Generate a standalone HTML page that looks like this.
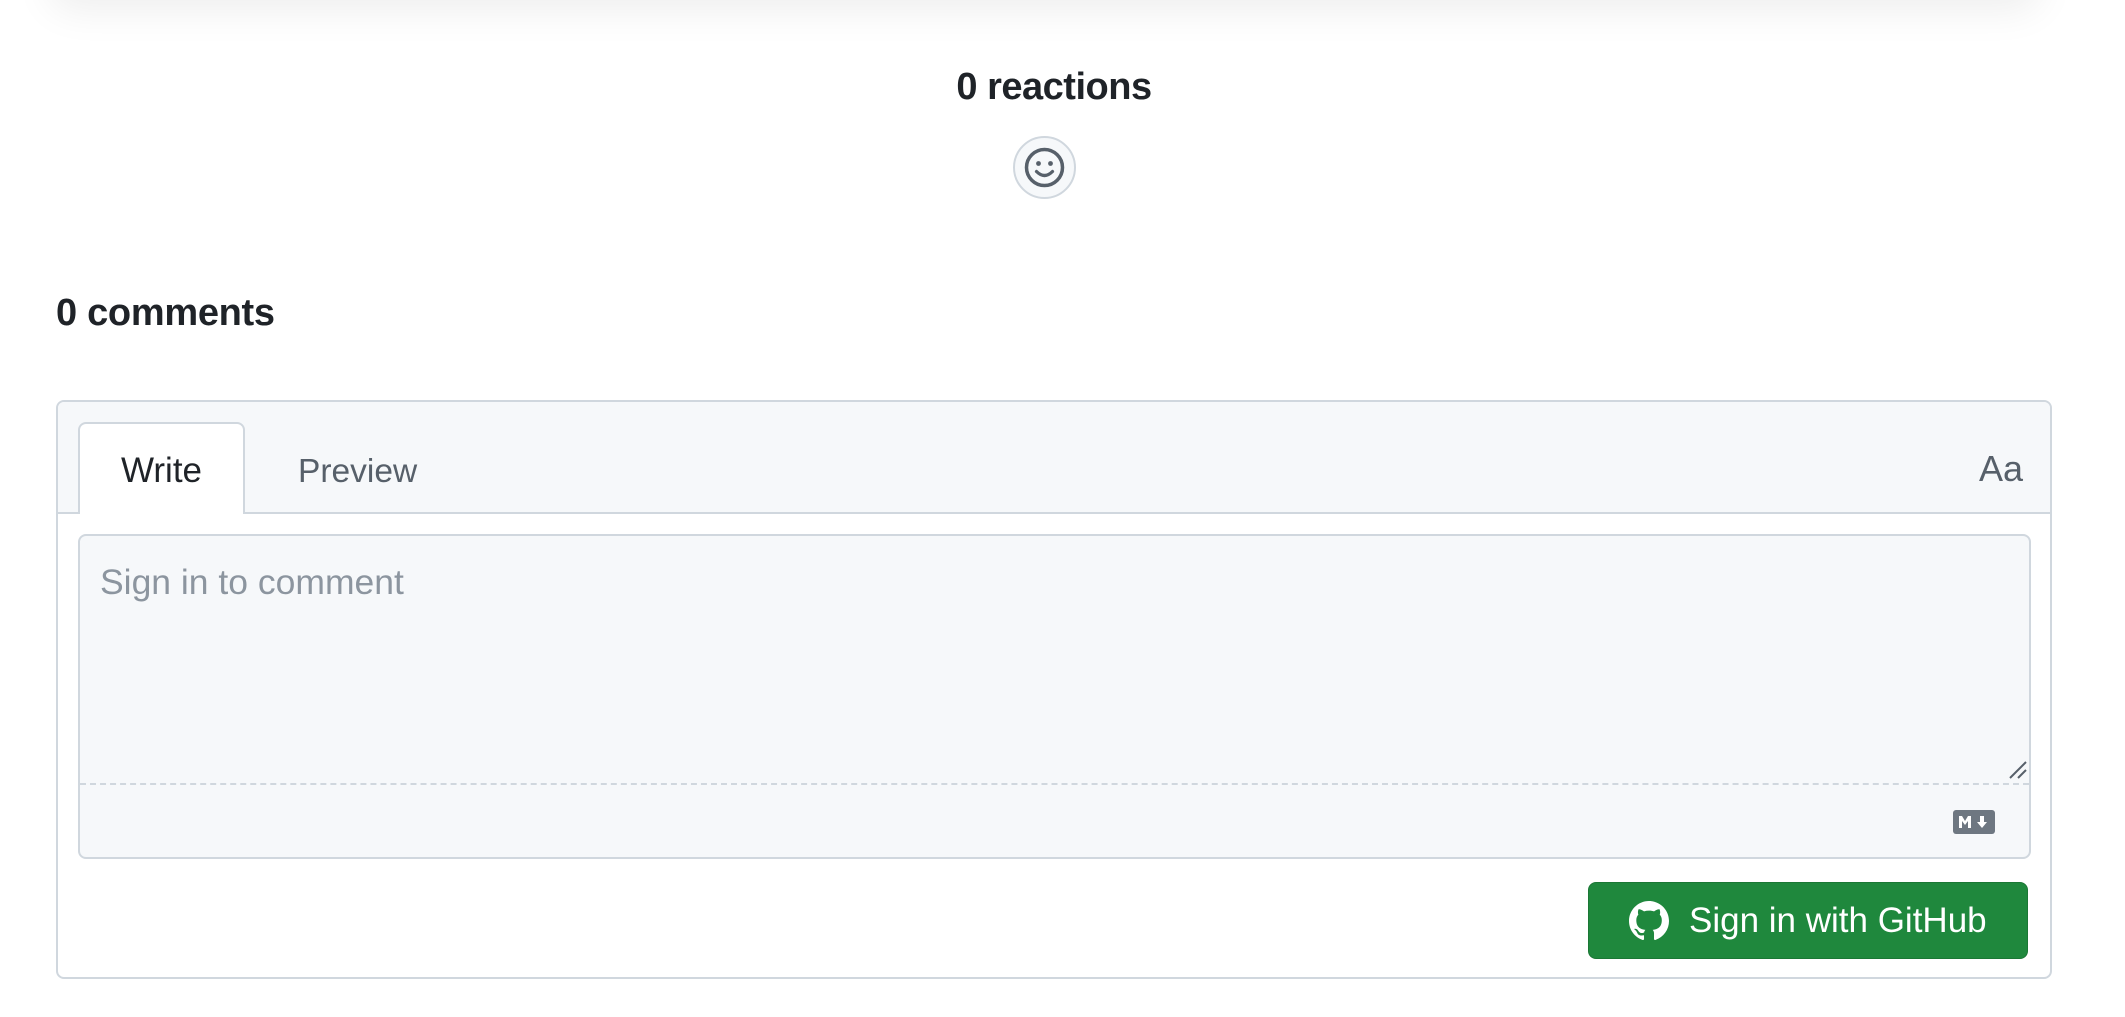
<!DOCTYPE html>
<html><head><meta charset="utf-8"><style>
*{box-sizing:border-box;margin:0;padding:0}
body{width:2125px;height:1017px;background:#fff;font-family:"Liberation Sans",sans-serif;position:relative;overflow:hidden;color:#1f2328}
.shadow{position:absolute;left:50px;top:-100px;width:1990px;height:100px;border-radius:20px;box-shadow:0 10px 40px rgba(0,0,0,0.07)}
.react{position:absolute;left:954px;width:200px;top:66px;text-align:center;font-size:38px;font-weight:bold;letter-spacing:-0.5px;line-height:42px}
.smile{position:absolute;left:1013px;top:136px;width:63px;height:63px;border-radius:50%;border:2px solid #d0d7de;background:#f6f8fa}
.cm{position:absolute;left:56px;top:292px;font-size:38px;font-weight:bold;letter-spacing:-0.3px;line-height:42px}
.box{position:absolute;left:56px;top:400px;width:1996px;height:579px;border:2px solid #d0d7de;border-radius:8px;background:#fff;overflow:hidden}
.hdr{position:absolute;left:0;top:0;width:100%;height:112px;background:#f6f8fa;border-bottom:2px solid #d0d7de}
.tab{position:absolute;left:20px;top:20px;width:167px;height:92px;background:#fff;border:2px solid #d0d7de;border-bottom:none;border-radius:8px 8px 0 0;font-size:35px;text-align:center;line-height:94px;color:#1f2328}
.prev{position:absolute;left:240px;top:26px;font-size:33.5px;line-height:88px;color:#57606a}
.aa{position:absolute;right:27px;top:27px;font-size:36px;line-height:80px;color:#57606a}
.ta{position:absolute;left:20px;top:132px;width:1953px;height:325px;border:2px solid #d0d7de;border-radius:8px;background:#f6f8fa}
.ph{position:absolute;left:20px;top:22px;font-size:35.5px;line-height:48px;color:#8c959f}
.dash{position:absolute;left:0;top:247px;width:100%;border-top:2px dashed #d0d7de}
.btn{position:absolute;left:1530px;top:480px;width:440px;height:77px;background:#1f883d;border-radius:8px;color:#fff;font-size:35px;line-height:75px;border:1px solid rgba(0,0,0,0.12)}
.btn span{position:absolute;left:100px}
</style></head><body>
<div class="shadow"></div>
<div class="react">0 reactions</div>
<div class="smile"><svg width="59" height="59" viewBox="0 0 59 59" style="position:absolute;left:0;top:0"><circle cx="29.5" cy="29.5" r="18" fill="none" stroke="#57606a" stroke-width="3.5"/><circle cx="23.5" cy="25.5" r="2.4" fill="#57606a"/><circle cx="35.5" cy="25.5" r="2.4" fill="#57606a"/><path d="M21.5 33.5 Q29.5 41.5 37.5 33.5" fill="none" stroke="#57606a" stroke-width="3.2" stroke-linecap="round"/></svg></div>
<div class="cm">0 comments</div>
<div class="box">
 <div class="hdr"></div>
 <div class="tab">Write</div>
 <div class="prev">Preview</div>
 <div class="aa">Aa</div>
 <div class="ta">
  <div class="ph">Sign in to comment</div>
  <svg style="position:absolute;left:1928px;top:224px" width="20" height="20" viewBox="0 0 20 20"><path d="M2 18 L18 2 M10 18 L18 10" stroke="#57606a" stroke-width="2"/></svg>
  <div class="dash"></div>
  <svg style="position:absolute;left:1873px;top:274px" width="42" height="24" viewBox="0 0 42 24"><rect width="42" height="24" rx="3" fill="#6e7781"/><path d="M6 18V6h3l3 5 3-5h3v12h-3v-7l-3 4-3-4v7z M27 6h4v6h3l-5 6-5-6h3z" fill="#fff"/></svg>
 </div>
 <div class="btn"><svg style="position:absolute;left:40px;top:18px" width="40" height="40" viewBox="0 0 16 16"><path fill="#fff" d="M8 0C3.58 0 0 3.58 0 8c0 3.540 2.29 6.53 5.47 7.59.4.07.55-.17.55-.38 0-.19-.01-.82-.01-1.49-2.01.37-2.53-.49-2.69-.94-.09-.23-.48-.94-.82-1.13-.28-.15-.68-.52-.01-.53.63-.01 1.08.58 1.23.82.72 1.21 1.87.87 2.33.66.07-.52.28-.87.51-1.07-1.78-.2-3.64-.89-3.64-3.95 0-.87.31-1.59.82-2.15-.08-.2-.36-1.02.08-2.12 0 0 .67-.21 2.2.82.64-.18 1.32-.27 2-.27.68 0 1.36.09 2 .27 1.53-1.04 2.2-.82 2.2-.82.44 1.1.16 1.92.08 2.12.51.56.82 1.27.82 2.15 0 3.07-1.87 3.75-3.65 3.95.29.25.54.73.54 1.48 0 1.07-.01 1.93-.01 2.2 0 .21.15.46.55.38A8.013 8.013 0 0016 8c0-4.42-3.58-8-8-8z"/></svg><span>Sign in with GitHub</span></div>
</div>
</body></html>
